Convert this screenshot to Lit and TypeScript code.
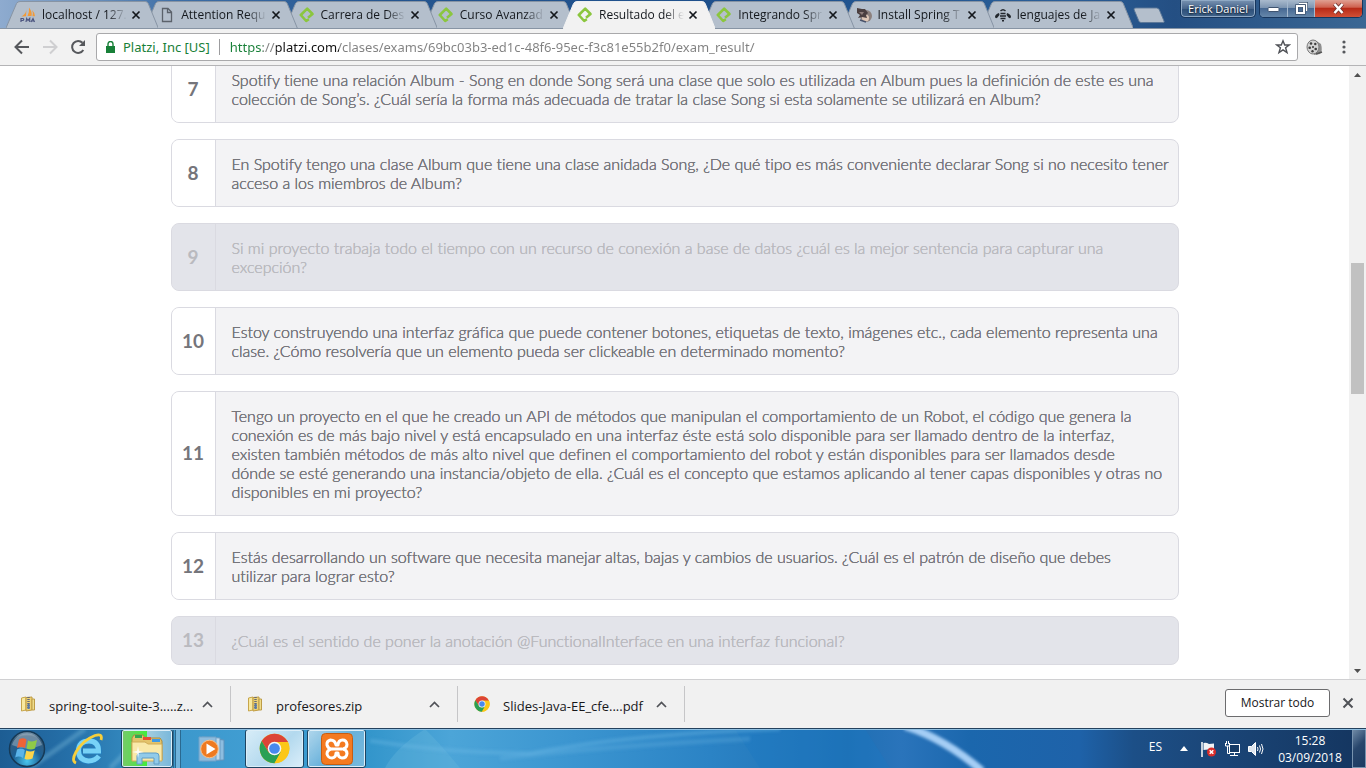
import { LitElement, html, css, svg } from "lit";
import { customElement, property } from "lit/decorators.js";
import { classMap } from "lit/directives/class-map.js";

interface Question {
  n: number;
  lines: string[];
  muted?: boolean;
}

const QUESTIONS: Question[] = [
  {
    n: 7,
    lines: [
      "Spotify tiene una relación Album - Song en donde Song será una clase que solo es utilizada en Album pues la definición de este es una",
      "colección de Song’s. ¿Cuál sería la forma más adecuada de tratar la clase Song si esta solamente se utilizará en Album?",
    ],
  },
  {
    n: 8,
    lines: [
      "En Spotify tengo una clase Album que tiene una clase anidada Song, ¿De qué tipo es más conveniente declarar Song si no necesito tener",
      "acceso a los miembros de Album?",
    ],
  },
  {
    n: 9,
    muted: true,
    lines: [
      "Si mi proyecto trabaja todo el tiempo con un recurso de conexión a base de datos ¿cuál es la mejor sentencia para capturar una",
      "excepción?",
    ],
  },
  {
    n: 10,
    lines: [
      "Estoy construyendo una interfaz gráfica que puede contener botones, etiquetas de texto, imágenes etc., cada elemento representa una",
      "clase. ¿Cómo resolvería que un elemento pueda ser clickeable en determinado momento?",
    ],
  },
  {
    n: 11,
    lines: [
      "Tengo un proyecto en el que he creado un API de métodos que manipulan el comportamiento de un Robot, el código que genera la",
      "conexión es de más bajo nivel y está encapsulado en una interfaz éste está solo disponible para ser llamado dentro de la interfaz,",
      "existen también métodos de más alto nivel que definen el comportamiento del robot y están disponibles para ser llamados desde",
      "dónde se esté generando una instancia/objeto de ella. ¿Cuál es el concepto que estamos aplicando al tener capas disponibles y otras no",
      "disponibles en mi proyecto?",
    ],
  },
  {
    n: 12,
    lines: [
      "Estás desarrollando un software que necesita manejar altas, bajas y cambios de usuarios. ¿Cuál es el patrón de diseño que debes",
      "utilizar para lograr esto?",
    ],
  },
  { n: 13, muted: true, lines: ["¿Cuál es el sentido de poner la anotación @FunctionalInterface en una interfaz funcional?"] },
];

const TABS = [
  { title: "localhost / 127.", icon: "pma" },
  { title: "Attention Requ", icon: "file" },
  { title: "Carrera de Des", icon: "platzi" },
  { title: "Curso Avanzad", icon: "platzi" },
  { title: "Resultado del e", icon: "platzi", active: true },
  { title: "Integrando Spr", icon: "platzi" },
  { title: "Install Spring T", icon: "photo" },
  { title: "lenguajes de Ja", icon: "bee" },
];

const DOWNLOADS = [
  { name: "spring-tool-suite-3.....z...", icon: "zip" },
  { name: "profesores.zip", icon: "zip" },
  { name: "Slides-Java-EE_cfe....pdf", icon: "chrome" },
];

const chromeLogo = svg`
  <circle cx="24" cy="24" r="23" fill="#fbc116"/>
  <path d="M4.1 12.5A23 23 0 0 1 43.9 12.5L45 14H24L15 30Z" fill="#dc4437"/>
  <path d="M4.1 12.5A23 23 0 0 0 24 47L34 29L24 34.500L15 30Z" fill="#2aa055"/>
  <path d="M24 47A23 23 0 0 0 44.9 14H24L34 29Z" fill="#fbc718"/>
  <circle cx="24" cy="24" r="10.500" fill="#f4f6f8"/>
  <circle cx="24" cy="24" r="8.300" fill="#4889ee"/>`;

const ICONS: Record<string, unknown> = {
  pma: html`<svg viewBox="0 0 16 16" width="16" height="16"><path d="M6.500 1Q7 6 1.500 9.500L6 9.300ZM9 .5Q12.500 5 11.500 9H7.500Q9.500 5 9 .5ZM12 3Q15 6 15 9.200H12.500Q13.500 6 12 3Z" fill="#f29a38"/><path d="M1 15V11.500H3Q4.500 12.500 3 13.500H1.500M6 15L6.700 11.500L8 13.500L9.700 11.500V15M11 15L13 11.500L14.500 15M11.800 14H14" fill="none" stroke="#4d5680" stroke-width="1.200"/></svg>`,
  file: html`<svg viewBox="0 0 16 16" width="16" height="16"><path d="M3.500 1.500H9L12.500 5V14.500H3.500ZM8.500 1.500V5.500H12.500" fill="none" stroke="#5b626b" stroke-width="1.300"/></svg>`,
  platzi: html`<svg viewBox="0 0 16 16" width="16" height="16"><path d="M9 10.700L13.500 7L8.200 1.600L1.800 8L7.200 14L9.800 12.200" fill="none" stroke="#8bc63e" stroke-width="2.600" stroke-linejoin="round"/></svg>`,
  photo: html`<svg viewBox="0 0 16 16" width="16" height="16"><circle cx="10" cy="9" r="6" fill="#8c817e"/><circle cx="9.500" cy="11" r="3.500" fill="#dec7b6"/><path d="M1 1L6 2L9 2L12 6L10 8L11 11L6 10L2 11L4 8L1 6Z" fill="#4a3f40"/><path d="M3 5L8 5L6 8Z" fill="#8d7d7a"/><path d="M4 13L10 15" stroke="#49536b" stroke-width="1.500"/></svg>`,
  bee: html`<svg viewBox="0 0 18 16" width="18" height="16"><path d="M6.500 4Q9 1.500 11.500 4M6.500 6.500H11.500M6 9H12M6.500 11.500H11.500M8 13.700H10" stroke="#22272d" stroke-width="1.400" fill="none"/><path d="M5 6Q1 7.500 1 10Q1.500 12 3.500 10.500L5.500 8ZM13 6Q17 7.500 17 10Q16.500 12 14.500 10.500L12.500 8Z" fill="#22272d"/></svg>`,
  zip: html`<svg viewBox="0 0 16 16" width="16" height="16"><path d="M1.500 2L6 1V14L1.500 15Z" fill="#f8e9a0" stroke="#c7a64b"/><path d="M6 1.500L12 1V14L6 15Z" fill="#edd276" stroke="#c09b40"/><path d="M12 3H14.500V14H12Z" fill="#efdc8b" stroke="#bd9c47"/><path d="M8.500 1V12" stroke="#666b78" stroke-width="2.500" stroke-dasharray="1 1"/><path d="M7.500 8H9.700V13H7.500Z" fill="#5979a6"/></svg>`,
  chrome: html`<svg viewBox="0 0 48 48" width="16" height="16">${chromeLogo}</svg>`,
};

const cross = html`<svg viewBox="0 0 10 10" width="10" height="10"><path d="M1.500 1.500L8.500 8.500M8.500 1.500L1.500 8.500" stroke="currentColor" stroke-width="1.700"/></svg>`;

const controlReset = css`
  button {
    font: inherit;
    color: inherit;
    border: 0;
    padding: 0;
    margin: 0;
    background: none;
    display: flex;
    align-items: center;
    justify-content: center;
  }
  svg {
    display: block;
    flex: none;
  }
`;

@customElement("browser-tab")
class BrowserTab extends LitElement {
  @property() label = "";
  @property() icon = "";
  @property({ type: Boolean, reflect: true }) active = false;

  static styles = [
    controlReset,
    css`
      :host {
        position: relative;
        display: block;
        flex: 1 1 0;
        min-width: 0;
        margin-right: -13px;
        height: 28px;
        color: #14181d;
      }
      .shape {
        position: absolute;
        inset: 0;
        width: 100%;
        height: 100%;
      }
      .shape path {
        fill: #b4bfcc;
        stroke: #8794a4;
        vector-effect: non-scaling-stroke;
      }
      :host([active]) .shape path {
        fill: #f2f2f2;
        stroke: #f2f2f2;
      }
      .row {
        position: relative;
        display: flex;
        align-items: center;
        box-sizing: border-box;
        height: 28px;
        padding: 2px 15px 0 14px;
      }
      .title {
        flex: 1;
        min-width: 0;
        margin-left: 6px;
        justify-content: flex-start;
        white-space: nowrap;
        font-size: 12px;
        line-height: 20px;
        -webkit-mask-image: linear-gradient(90deg, #000 76%, transparent);
        mask-image: linear-gradient(90deg, #000 76%, transparent);
      }
      .icon {
        display: flex;
        width: 16px;
        justify-content: center;
      }
      .close {
        width: 14px;
        height: 16px;
        margin-left: 2px;
      }
    `,
  ];

  render() {
    return html`
      <svg class="shape" viewBox="0 0 152 28" preserveAspectRatio="none"><path d="M0 28L10.500 3.500Q11.500 1.500 14 1.500H139Q141 1.500 142 3.500L152 28"/></svg>
      <div class="row">
        <span class="icon">${ICONS[this.icon]}</span>
        <button class="title" role="tab" aria-selected=${this.active ? "true" : "false"}>${this.label}</button>
        <button class="close" aria-label="Cerrar">${cross}</button>
      </div>
    `;
  }
}

@customElement("browser-header")
class BrowserHeader extends LitElement {
  static styles = [
    controlReset,
    css`
      :host {
        display: block;
        flex: none;
      }
      .strip {
        display: flex;
        align-items: flex-start;
        height: 28px;
        padding-left: 6px;
        border-bottom: 1px solid #8794a4;
        background: linear-gradient(90deg, #8eabcf 0, #6f93bd 6%, #3d6ea6 13%, #24558f 28%, #1d4f8b 55%, #2b5f98 78%, #244f83 86%, #3b6794 100%);
      }
      .tabs {
        display: flex;
        flex: 0 1 1127px;
        min-width: 0;
        padding-right: 13px;
        box-sizing: border-box;
        height: 29px;
        isolation: isolate;
      }
      browser-tab:nth-child(1) { z-index: 8; }
      browser-tab:nth-child(2) { z-index: 7; }
      browser-tab:nth-child(3) { z-index: 6; }
      browser-tab:nth-child(4) { z-index: 5; }
      browser-tab:nth-child(6) { z-index: 4; }
      browser-tab:nth-child(7) { z-index: 3; }
      browser-tab:nth-child(8) { z-index: 2; }
      browser-tab[active] {
        z-index: 9;
        height: 29px;
      }
      .newtab {
        margin-top: 7px;
      }
      .frame {
        display: flex;
        gap: 3px;
        margin-left: auto;
        padding-right: 3px;
      }
      .user,
      .win {
        box-sizing: border-box;
        height: 18px;
        border: 1px solid #17365d;
        border-top: 0;
        border-radius: 0 0 5px 5px;
        box-shadow: inset 0 0 0 1px #8fa9c5;
        overflow: hidden;
      }
      .user {
        width: 76px;
        font-size: 11px;
        line-height: 16px;
        color: #fff;
        text-shadow: 0 1px 2px #000;
        background: linear-gradient(#7993b2, #47658b 50%, #2e5079 55%, #43678f);
      }
      .win {
        display: flex;
      }
      .win button {
        height: 17px;
        border-right: 1px solid #a4b8ce;
        background: linear-gradient(#a9bacd 0, #7d95b1 45%, #476993 50%, #6687aa 100%);
      }
      .min { width: 28px; }
      .max { width: 27px; }
      .win .shut {
        width: 47px;
        border-right: 0;
        background: linear-gradient(#e0a092 0, #cf6250 42%, #b82b18 50%, #d25036 100%);
      }
      .toolbar {
        display: flex;
        align-items: center;
        height: 36px;
        padding: 0 12px;
        background: #f2f2f2;
        border-bottom: 1px solid #b4b4b6;
      }
      .nav {
        width: 20px;
        height: 24px;
        margin-right: 8px;
        color: #56585c;
      }
      .nav.off { color: #cfcfd1; }
      .omnibox {
        display: flex;
        align-items: center;
        flex: 1;
        box-sizing: border-box;
        height: 28px;
        margin-right: 6px;
        padding: 0 4px 0 9px;
        border: 1px solid #a9a9ab;
        border-radius: 3px;
        background: #fff;
        font-family: "Noto Sans", "Open Sans", sans-serif;
        font-size: 13px;
        line-height: 20px;
      }
      .cert {
        color: #188038;
        padding-left: 8px;
        margin-right: 9px;
        white-space: nowrap;
      }
      .rule {
        width: 1px;
        height: 16px;
        background: #9c9c9e;
      }
      .url {
        flex: 1;
        min-width: 0;
        margin-left: 10px;
        padding: 0;
        border: 0;
        outline: 0;
        font: inherit;
        color: transparent;
        background: linear-gradient(90deg, #188038 33px, #808080 33px 46px, #111 46px 109px, #808080 109px);
        -webkit-background-clip: text;
        background-clip: text;
      }
      .tool {
        width: 20px;
        height: 24px;
      }
      .menu { margin-left: 10px; }
    `,
  ];

  render() {
    return html`
      <div class="strip">
        <div class="tabs" role="tablist">
          ${TABS.map((t) => html`<browser-tab .label=${t.title} .icon=${t.icon} ?active=${!!t.active}></browser-tab>`)}
        </div>
        <button class="newtab" aria-label="Nueva pestaña"><svg width="32" height="17" viewBox="0 0 34 17"><path d="M3 .5H25Q27 .5 28 2.500L33 14.500Q33.500 16 32 16H9Q7 16 6.300 14.500L1.200 2.500Q.5 .5 3 .5Z" fill="#b4bfcc" stroke="#5c7797"/></svg></button>
        <div class="frame">
          <button class="user">Erick Daniel</button>
          <div class="win">
            <button class="min" aria-label="Minimizar"><svg width="13" height="6"><rect x="1" y="1.500" width="11" height="4" rx="1" fill="#fff" stroke="#3f5470"/></svg></button>
            <button class="max" aria-label="Restaurar"><svg width="13" height="13" fill="none"><path d="M4 1.500H11.500V9" stroke="#3f5470" stroke-width="3"/><path d="M4 1.500H11.500V9" stroke="#fff" stroke-width="1.500"/><rect x="2" y="4" width="7" height="7" stroke="#3f5470" stroke-width="3.500"/><rect x="2" y="4" width="7" height="7" stroke="#fff" stroke-width="2"/></svg></button>
            <button class="shut" aria-label="Cerrar ventana"><svg width="13" height="11"><path d="M2.500 1L10.500 10M10.500 1L2.500 10" stroke="#6d3431" stroke-width="4"/><path d="M2.500 1L10.500 10M10.500 1L2.500 10" stroke="#fff" stroke-width="2.500"/></svg></button>
          </div>
        </div>
      </div>
      <div class="toolbar">
        <button class="nav" aria-label="Atrás"><svg width="16" height="16" fill="none" stroke="currentColor" stroke-width="2"><path d="M15 8H2.500M8 1.500L1.500 8L8 14.500"/></svg></button>
        <button class="nav off" aria-label="Adelante"><svg width="16" height="16" fill="none" stroke="currentColor" stroke-width="2"><path d="M1 8H13.500M8 1.500L14.500 8L8 14.500"/></svg></button>
        <button class="nav" aria-label="Recargar"><svg width="16" height="16" fill="none"><path d="M13.300 11A6 6 0 1 1 12.500 3.800" stroke="currentColor" stroke-width="2"/><path d="M15 1V7H9Z" fill="currentColor"/></svg></button>
        <div class="omnibox">
          <svg width="9" height="12" viewBox="0 0 9 12"><path d="M0 5H9V12H0Z" fill="#188038"/><path d="M2 6V3A2.500 2.500 0 0 1 7 3V6" fill="none" stroke="#188038" stroke-width="1.400"/></svg>
          <span class="cert">Platzi, Inc [US]</span>
          <span class="rule"></span>
          <input class="url" type="text" aria-label="Dirección" value="https://platzi.com/clases/exams/69bc03b3-ed1c-48f6-95ec-f3c81e55b2f0/exam_result/">
          <button class="tool" aria-label="Favorito"><svg width="16" height="16"><path d="M8 1.800L9.700 6H14.200L10.600 8.800L12 13.500L8 10.800L4 13.500L5.400 8.800L1.800 6H6.300Z" fill="none" stroke="#505257" stroke-width="1.400"/></svg></button>
        </div>
        <button class="tool" aria-label="Extensión"><svg width="17" height="17" viewBox="0 0 17 17"><path d="M9 1L15 5Q17 12 14 15L8 16Z" fill="#8f8f8f"/><ellipse cx="7" cy="8" rx="6" ry="7" fill="#d3d3d3" stroke="#787878"/><circle cx="7" cy="8" r="1" fill="#333"/><g fill="#3d3d3d"><circle cx="5" cy="4.500" r="1.300"/><circle cx="9.300" cy="5" r="1.200"/><circle cx="3.700" cy="8.800" r="1.300"/><circle cx="9.700" cy="10" r="1.300"/><circle cx="6.500" cy="12.200" r="1.200"/></g><path d="M10 15L16 13" stroke="#555" stroke-width="1.500"/></svg></button>
        <button class="tool menu" aria-label="Menú"><svg width="4" height="14" fill="#56585c"><circle cx="2" cy="2" r="1.600"/><circle cx="2" cy="7" r="1.600"/><circle cx="2" cy="12" r="1.600"/></svg></button>
      </div>
    `;
  }
}

@customElement("exam-page")
class ExamPage extends LitElement {
  static styles = [
    controlReset,
    css`
      :host {
        display: flex;
        flex: 1;
        min-height: 0;
        overflow: hidden;
        background: #fff;
      }
      .page {
        flex: 1;
        min-width: 0;
        overflow: hidden;
      }
      .list {
        list-style: none;
        display: flex;
        flex-direction: column;
        gap: 16px;
        max-width: 1008px;
        margin: -11px auto 0;
        padding: 0;
        font-family: Lato, "Liberation Sans", sans-serif;
        color: #75757b;
      }
      .card {
        display: flex;
        border: 1px solid #dadae1;
        border-radius: 8px;
        background: #f3f3f5;
        overflow: hidden;
      }
      .num {
        display: flex;
        align-items: center;
        justify-content: center;
        flex: none;
        width: 43px;
        padding-bottom: 2px;
        border-right: 1px solid #dadae1;
        background: #fff;
        font-size: 19px;
        font-weight: 700;
      }
      .text {
        margin: 0;
        padding: 14px 4px 14px 16px;
        font-size: 16px;
        font-weight: 300;
        line-height: 19px;
        font-variant-ligatures: none;
        text-shadow: 0 0 0 currentColor, 0 0 0 currentColor;
        white-space: pre-line;
      }
      .muted,
      .muted .num {
        background: #e3e4ea;
        color: #bababf;
      }
      .scroll {
        display: flex;
        flex-direction: column;
        width: 17px;
        background: #f1f1f1;
      }
      .arrow {
        height: 17px;
        color: #505050;
      }
      .above { flex: 180; }
      .thumb {
        flex: 131;
        margin: 0 2px;
        background: #c1c1c1;
      }
      .below { flex: 268; }
    `,
  ];

  render() {
    return html`
      <main class="page">
        <ol class="list">
          ${QUESTIONS.map(
            (q) => html`<li class=${classMap({ card: true, muted: !!q.muted })}>
              <span class="num">${q.n}</span>
              <p class="text">${q.lines.join("\n")}</p>
            </li>`
          )}
        </ol>
      </main>
      <div class="scroll">
        <button class="arrow" aria-label="Subir"><svg width="7" height="4"><path d="M0 4L3.500 0L7 4Z" fill="currentColor"/></svg></button>
        <span class="above"></span><span class="thumb"></span><span class="below"></span>
        <button class="arrow" aria-label="Bajar"><svg width="7" height="4"><path d="M0 0L3.500 4L7 0Z" fill="currentColor"/></svg></button>
      </div>
    `;
  }
}

@customElement("download-shelf")
class DownloadShelf extends LitElement {
  static styles = [
    controlReset,
    css`
      :host {
        display: flex;
        align-items: center;
        flex: none;
        height: 48px;
        padding: 0 8px 0 4px;
        border-top: 1px solid #d0d0d2;
        background: #f1f1f1;
        color: #17171a;
      }
      .item {
        display: flex;
        align-items: center;
        flex: 0 1 226px;
        min-width: 0;
        height: 36px;
        border-right: 1px solid #c6c6c8;
      }
      .open {
        flex: 1;
        min-width: 0;
        justify-content: flex-start;
        padding-left: 16px;
        gap: 13px;
        white-space: nowrap;
        font-size: 13px;
        line-height: 20px;
      }
      .name {
        padding-top: 4px;
      }
      .more {
        width: 20px;
        height: 24px;
        margin-right: 13px;
      }
      .all {
        box-sizing: border-box;
        width: 105px;
        height: 28px;
        margin-left: auto;
        margin-bottom: 2px;
        padding-bottom: 2px;
        border: 1px solid #6c6c6e;
        border-radius: 3px;
        background: #fff;
        font-size: 12px;
      }
      .close {
        width: 20px;
        height: 24px;
        margin-left: 8px;
        margin-bottom: 2px;
        color: #505257;
      }
    `,
  ];

  render() {
    return html`
      ${DOWNLOADS.map(
        (d) => html`<div class="item">
          <button class="open">${ICONS[d.icon]}<span class="name">${d.name}</span></button>
          <button class="more" aria-label="Opciones de ${d.name}"><svg width="11" height="7"><path d="M1 6L5.500 1.500L10 6" fill="none" stroke="#505257" stroke-width="1.700"/></svg></button>
        </div>`
      )}
      <button class="all">Mostrar todo</button>
      <button class="close" aria-label="Cerrar descargas"><svg width="12" height="12"><path d="M1.500 1.500L10.500 10.500M10.500 1.500L1.500 10.500" stroke="currentColor" stroke-width="2"/></svg></button>
    `;
  }
}

@customElement("task-bar")
class TaskBar extends LitElement {
  static styles = [
    controlReset,
    css`
      :host {
        position: relative;
        display: flex;
        align-items: stretch;
        flex: none;
        box-sizing: border-box;
        height: 40px;
        border-top: 1px solid #24425e;
        overflow: hidden;
        color: #fff;
        background: linear-gradient(90deg, #1d5d93 0, #256fa8 5%, #3b97cb 12%, #429fd4 20%, #2f93c9 26%, #4ca5d8 33%, #3b95d0 42%, #2b83c5 52%, #1f6fb3 62%, #2a74bb 66%, #1b67ad 71%, #1e62a9 79%, #1c4f87 83%, #1b477a 88%, #14355f 100%);
      }
      .aurora {
        position: absolute;
        inset: 0;
        width: 100%;
        height: 100%;
      }
      .apps,
      .tray {
        position: relative;
        display: flex;
        align-items: stretch;
      }
      .edge {
        position: absolute;
        inset: 0 0 auto;
        height: 1px;
        background: #8fc0e2;
      }
      .orb { width: 54px; }
      .ie { width: 67px; }
      .app {
        box-sizing: border-box;
        border: 1px solid #1d4462;
        border-radius: 3px;
        box-shadow: inset 0 0 0 1px #dceef8;
        width: 59px;
        margin-right: 3px;
        background: linear-gradient(135deg, #cfe6f3cc, #8fc5e599 50%, #a6d3eb99);
      }
      .files {
        width: 52px;
        margin-right: 0;
        background: linear-gradient(90deg, #78c96a 0, #42ec3d 50%, #a3cdde 51%, #78b7db 100%);
      }
      .stack {
        width: 8px;
        box-sizing: border-box;
        border: solid #2a6990;
        border-width: 0 1px;
        box-shadow: inset -4px 0 #71b4dc, inset -5px 0 #2a6990;
      }
      .media {
        width: 62px;
        margin-right: 2px;
      }
      .chrome { background: linear-gradient(135deg, #d8edf8, #b3d9ee 55%, #dbeefa); }
      .tray {
        margin-left: auto;
        font-size: 12px;
        line-height: 17px;
      }
      .lang {
        font-size: 12px;
        padding: 0 10px 4px 0;
      }
      .icon {
        width: 24px;
      }
      .clock {
        width: 84px;
        flex-direction: column;
        text-align: center;
      }
      .desktop {
        box-sizing: border-box;
        width: 14px;
        border: 1px solid #7893af;
        background: linear-gradient(135deg, #6f89a5, #28466c 45%, #1b3a62);
      }
    `,
  ];

  render() {
    return html`
      <svg class="aurora" viewBox="0 0 1366 40" preserveAspectRatio="none" aria-hidden="true">
        <defs><filter id="soft" x="-10%" y="-50%" width="120%" height="200%"><feGaussianBlur stdDeviation="1.500"/></filter></defs>
        <path d="M425 0Q440 15 460 40H385Q395 20 425 0Z" fill="#67b6dd" opacity=".35"/>
        <path d="M735 0L760 40H890L865 0Z" fill="#1b78c4" opacity=".35"/>
        <g fill="none" filter="url(#soft)">
          <path d="M370 12Q450 25 530 25Q630 5 780 0" stroke="#72bce8" stroke-width="4" opacity=".35"/>
          <path d="M500 30Q600 18 750 10" stroke="#72bce8" stroke-width="5" opacity=".25"/>
          <path d="M30 40L85 0M110 40Q135 15 145 0" stroke="#83c4df" stroke-width="5" opacity=".35"/>
          <path d="M905 -3Q945 10 982 43" stroke="#a5cef5" stroke-width="8"/>
        </g>
      </svg>
      <div class="apps">
        <button class="orb" aria-label="Inicio"><svg width="38" height="38" viewBox="0 0 38 38">
          <defs><radialGradient id="orb" cx=".5" cy=".85" r=".9"><stop offset="0" stop-color="#48c5ee"/><stop offset=".45" stop-color="#1c5f94"/><stop offset=".8" stop-color="#385d7b"/><stop offset="1" stop-color="#b1c7d6"/></radialGradient></defs>
          <circle cx="19" cy="19" r="17.500" fill="url(#orb)" stroke="#163a57" stroke-width="1.500"/>
          <path d="M4 15A15.500 15.500 0 0 1 34 15Q19 22 4 15Z" fill="#fff" opacity=".28"/>
          <path d="M11 9.500Q15 7 18.500 9.500L17 18Q13.500 16 9 18Z" fill="#ee6337"/>
          <path d="M20 10.500Q24 12.500 29 10L27 18.500Q23 20.500 18.500 18.500Z" fill="#8fca48"/>
          <path d="M9 19.500Q13 17.500 16.800 20L15 28Q11 25.500 7.200 27.500Z" fill="#5bb4ea"/>
          <path d="M18.300 20.500Q22.500 22.500 26.700 20.200L24.500 28.500Q20 30.500 16.500 28.700Z" fill="#fbd44a"/>
        </svg></button>
        <button class="ie" aria-label="Internet Explorer"><svg width="32" height="32" viewBox="0 0 32 32" fill="none">
          <path d="M27 23Q23 28 16.500 28Q6.500 27 6.500 17.500Q7 8 17 8Q26.500 8 26.500 18H11" stroke="#237fc0" stroke-width="6.500"/>
          <path d="M27 23Q23 28 16.500 28Q6.500 27 6.500 17.500Q7 8 17 8Q26.500 8 26.500 18H11" stroke="#77d2f7" stroke-width="5"/>
          <path d="M4 30Q-1 28 4 19Q11 7 23 2.500Q31 0 29 7" stroke="#f6cf3c" stroke-width="2.800"/>
        </svg></button>
        <button class="app files" aria-label="Explorador de archivos"><svg width="34" height="32" viewBox="0 0 34 32">
          <path d="M2 5L4 2H13L15 5H30L32 8V27H2Z" fill="#e4c46b" stroke="#ad8c3d"/>
          <path d="M5 2H12V5H5Z" fill="#35a84e"/><path d="M13 4H21V7H13Z" fill="#e74e35"/><path d="M22 6H30V9H22Z" fill="#3d9ae6"/>
          <path d="M2 9H15L18 11H32V28H2Z" fill="#f9e9a9" stroke="#d0ad58"/>
          <path d="M7 31V23Q7 20 10 20H26Q29 20 29 23V31H24V25H12V31Z" fill="#91cbea" stroke="#5f9dc7"/>
          <path d="M8 13L9 18L14 19L9 20L8 25L7 20L2 19L7 18Z" fill="#fff" opacity=".85"/>
        </svg></button>
        <span class="stack"></span>
        <button class="media" aria-label="Reproductor"><svg width="28" height="26" viewBox="0 0 28 26">
          <path d="M7 2L26 4V24L7 25Z" fill="#8dbde0" stroke="#5f92bb"/><path d="M4 1L22 2V24L4 25Z" fill="#bfd9ec" stroke="#6b9cc2"/><path d="M1 1H18V25H1Z" fill="#8fbcdd" stroke="#71a2c8"/>
          <circle cx="11.500" cy="13" r="8.800" fill="#ee7a21" stroke="#f9c088"/><path d="M8.500 7.500L17.500 13L8.500 18.500Z" fill="#fff"/>
        </svg></button>
        <button class="app chrome" aria-label="Google Chrome"><svg width="31" height="31" viewBox="0 0 48 48">${chromeLogo}</svg></button>
        <button class="app" aria-label="XAMPP"><svg width="32" height="32" viewBox="0 0 32 32">
          <rect x=".5" y=".5" width="31" height="31" rx="4" fill="#f47a20" stroke="#c65d12"/>
          <path d="M15 12Q14 7 9.500 7Q5.500 8 6 12Q7 15.500 10.500 16Q6 17 6 21Q7 25 11 25Q15 24.500 15 20H17Q17 24.500 21 25Q25.500 25 26 20.500Q26 17 22 16Q26 15 26 11.500Q25.500 7 21.500 7Q17.500 7 17 12Z" fill="none" stroke="#fff" stroke-width="3" stroke-linejoin="round"/>
          <path d="M11 16H21" stroke="#fff" stroke-width="3"/>
        </svg></button>
      </div>
      <div class="tray">
        <button class="lang">ES</button>
        <button class="icon" aria-label="Iconos ocultos"><svg width="8" height="5"><path d="M0 5L4 0L8 5Z" fill="#fff"/></svg></button>
        <button class="icon" aria-label="Centro de actividades"><svg width="16" height="16"><path d="M2 1V16" stroke="#fff" stroke-width="1.500"/><path d="M3.500 2Q6 1 9 3L14 2.500V9Q10 10 8 8.500L3.500 9Z" fill="#f0f3f6"/><circle cx="11.500" cy="11" r="4.500" fill="#d92d2a"/><path d="M9.700 9.200L13.300 12.800M13.300 9.200L9.700 12.800" stroke="#fff" stroke-width="1.500"/></svg></button>
        <button class="icon" aria-label="Red"><svg width="16" height="16" fill="none" stroke="#fff"><rect x="5.500" y="3.500" width="10" height="8" fill="#173b66"/><path d="M10.500 12V14M6 14.500H14M1.500 2V5H5.500V2M2.500 0V3M4.500 0V3M3.500 5V12.500H6"/></svg></button>
        <button class="icon" aria-label="Volumen"><svg width="16" height="16" fill="none" stroke="#fff"><path d="M.5 5.500H3.500L7.500 1.500V14.500L3.500 10.500H.5Z" fill="#dfe6ee"/><path d="M9.500 6Q10.500 8 9.500 10M11.500 4.500Q13.500 8 11.500 11.500M13.500 3Q16.500 8 13.500 13"/></svg></button>
        <button class="clock"><span>15:28</span><span>03/09/2018</span></button>
        <button class="desktop" aria-label="Mostrar escritorio"></button>
      </div>
      <span class="edge"></span>
    `;
  }
}

@customElement("app-root")
class AppRoot extends LitElement {
  static styles = css`
    :host {
      display: flex;
      flex-direction: column;
      height: 100vh;
      overflow: hidden;
      font-family: "Open Sans", "Noto Sans", sans-serif;
    }
  `;

  render() {
    return html`
      <browser-header></browser-header>
      <exam-page></exam-page>
      <download-shelf></download-shelf>
      <task-bar></task-bar>
    `;
  }
}
